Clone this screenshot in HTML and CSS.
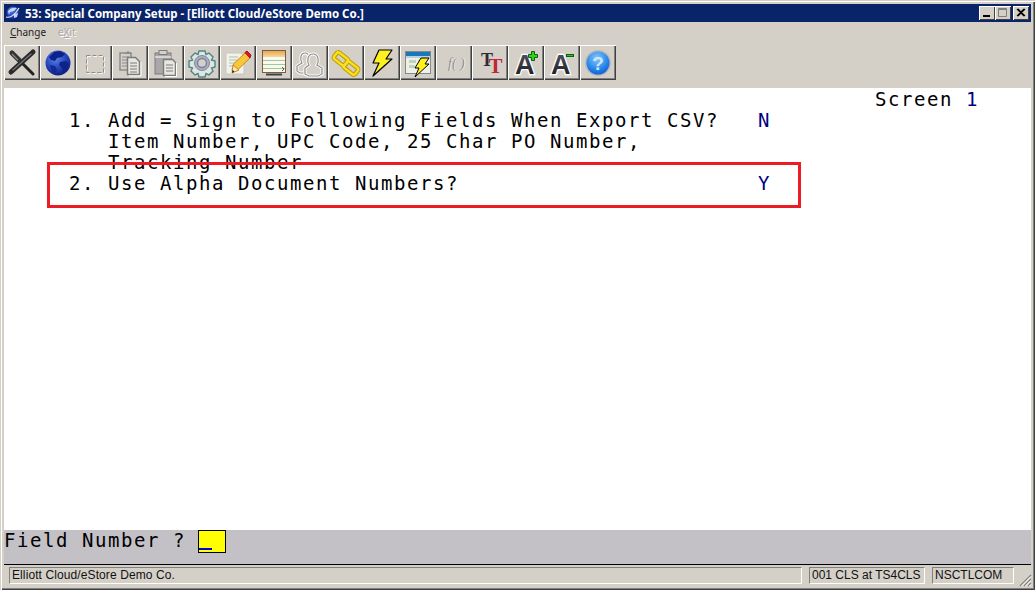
FILE: index.html
```html
<!DOCTYPE html>
<html lang="en">
<head>
  <meta charset="UTF-8" />
  <title>53: Special Company Setup</title>
  <link rel="stylesheet" href="styles.css">
</head>
<body>

<svg class="defs" width="0" height="0">
  <defs>
    <radialGradient id="globe" cx="40%" cy="30%" r="75%">
      <stop offset="0" stop-color="#5a86e8"/>
      <stop offset="0.6" stop-color="#2140b8"/>
      <stop offset="1" stop-color="#0c1a78"/>
    </radialGradient>
    <radialGradient id="help" cx="45%" cy="30%" r="75%">
      <stop offset="0" stop-color="#8cc8fa"/>
      <stop offset="0.6" stop-color="#2a8aec"/>
      <stop offset="1" stop-color="#0c5ad0"/>
    </radialGradient>
    <linearGradient id="letter" x1="0" y1="0" x2="0" y2="1">
      <stop offset="0" stop-color="#5a5a68"/>
      <stop offset="1" stop-color="#14141c"/>
    </linearGradient>
    <linearGradient id="sheet" x1="0" y1="0" x2="0" y2="1">
      <stop offset="0" stop-color="#e8a850"/>
      <stop offset="1" stop-color="#f4d89c"/>
    </linearGradient>
  </defs>
</svg>

<div class="window">

  <div class="titlebar">
    <svg class="app-icon" width="16" height="16" viewBox="0 0 16 16">
      <circle cx="8" cy="8" r="6.5" fill="url(#globe)"/>
      <path d="M3 6c2-3 6-4 9-3l-3 3-4 1-1 3zM9 9l4-1-1 4-3 1z" fill="#c8d4f4"/>
      <path d="M1 12c4 1 9-2 13-9" fill="none" stroke="#e8e8f4" stroke-width="1.2"/>
    </svg>
    <span class="title-text">53: Special Company Setup - [Elliott Cloud/eStore Demo Co.]</span>
    <div class="win-buttons">
      <div class="win-btn"><svg width="16" height="14"><rect x="4" y="9" width="7" height="2" fill="#000"/></svg></div>
      <div class="win-btn"><svg width="16" height="14"><path d="M3.5 2.5h8v8h-8z M3.5 3.5h8" fill="none" stroke="#808080"/></svg></div>
      <div class="win-btn close"><svg width="16" height="14"><path d="M4 3l7 7M5 3l7 7M11 3l-7 7M12 3l-7 7" stroke="#000" fill="none" stroke-width="1.1"/></svg></div>
    </div>
  </div>

  <div class="menubar">
    <span class="menu-item"><u>C</u>hange</span>
    <span class="menu-item disabled">e<u>X</u>it</span>
  </div>

  <div class="toolbar">
    <div class="tool">
      <svg width="30" height="30" viewBox="0 0 30 30">
        <path d="M5 5l21 21" stroke="#222" stroke-width="3" stroke-linecap="round"/>
        <path d="M26 4L4 24" stroke="#2a2a2a" stroke-width="5" stroke-linecap="round"/>
        <path d="M24 6L6 22" stroke="#777" stroke-width="1.2" stroke-linecap="round"/>
        <path d="M5 5l7 7" stroke="#333" stroke-width="5" stroke-linecap="round"/>
        <path d="M5 6l6 6" stroke="#888" stroke-width="1.2"/>
      </svg>
    </div>
    <div class="tool">
      <svg width="30" height="30" viewBox="0 0 30 30">
        <circle cx="15" cy="15" r="12.5" fill="url(#globe)"/>
        <path d="M11 4l6-1 5 3-3 3-5 1-2 3-4-1-2-3zM17 14l6-1 3 3-2 6-4 3-1-5-3-3z" fill="#0f2288"/>
        <path d="M7 17l5 1 2 4-2 4-3-3z" fill="#14288e"/>
      </svg>
    </div>
    <div class="tool">
      <svg width="30" height="30" viewBox="0 0 30 30">
        <rect x="7.5" y="7.5" width="17" height="17" fill="none" stroke="#fff" stroke-width="1" stroke-dasharray="4 2" transform="translate(0.8 0.8)"/>
        <rect x="7.5" y="7.5" width="17" height="17" fill="none" stroke="#8c8c8c" stroke-width="1" stroke-dasharray="4 2"/>
      </svg>
    </div>
    <div class="tool">
      <svg width="30" height="30" viewBox="0 0 30 30">
        <path d="M5 5h11v17H5z" fill="#d4d0c8" stroke="#8c8c8c" stroke-width="1.5"/>
        <path d="M7 9h7M7 12h7M7 15h7M7 18h7" stroke="#8c8c8c"/>
        <path d="M13 3l4 3h-8z" fill="#8c8c8c"/>
        <path d="M12.5 9.5h8l4 4v13h-12z" fill="#e8e6e0" stroke="#7c7c7c" stroke-width="1.5"/>
        <path d="M15 15h7M15 18h7M15 21h7M15 24h7" stroke="#7c7c7c"/>
        <path d="M26 14v14H14" fill="none" stroke="#fff"/>
      </svg>
    </div>
    <div class="tool">
      <svg width="30" height="30" viewBox="0 0 30 30">
        <rect x="4" y="5" width="16" height="21" fill="#a8a8a8" stroke="#7c7c7c"/>
        <rect x="8" y="2.5" width="8" height="4" fill="#d4d0c8" stroke="#7c7c7c"/>
        <path d="M4 9h16" stroke="#fff"/>
        <path d="M12.5 11.5h9l3 3v13h-12z" fill="#e8e6e0" stroke="#7c7c7c" stroke-width="1.4"/>
        <path d="M15 17h7M15 20h7M15 23h7" stroke="#7c7c7c"/>
        <path d="M25.5 15v13.5H14" fill="none" stroke="#fff"/>
      </svg>
    </div>
    <div class="tool">
      <svg width="30" height="30" viewBox="0 0 30 30">
        <path d="M12 3h6l1 3.5 3-1.500 4 4-1.500 3 3.500 1v6l-3.500 1 1.500 3-4 4-3-1.500-1 3.500h-6l-1-3.500-3 1.500-4-4 1.500-3-3.500-1v-6l3.500-1-1.500-3 4-4 3 1.500z" fill="#dfe6e0" stroke="#4f8684" stroke-width="1.4"/>
        <circle cx="15" cy="15" r="7.5" fill="#aab0c0" stroke="#8088a0"/>
        <circle cx="15" cy="15" r="4.5" fill="#d4d0c8" stroke="#7c80a0" stroke-width="1.4"/>
      </svg>
    </div>
    <div class="tool">
      <svg width="30" height="30" viewBox="0 0 30 30">
        <path d="M3 5h15l3 3v18H3z" fill="#f4f2ec" stroke="#c8c8bc"/>
        <path d="M6 9h9M6 12h10M6 15h7M6 18h5" stroke="#a8c0a0"/>
        <path d="M9 22l1.500-6L22 5l5 5-11.500 11z" fill="#f8c838" stroke="#c88820"/>
        <path d="M22 4.500l2-1.500 4 4-1 3z" fill="#d81830" stroke="#b01020"/>
        <path d="M9 25l1-8 6 5z" fill="#f8e8c0" stroke="#c88820"/>
        <path d="M9 25l.5-3 2 1.500z" fill="#222"/>
      </svg>
    </div>
    <div class="tool">
      <svg width="30" height="30" viewBox="0 0 30 30">
        <rect x="3.5" y="2.5" width="23" height="22" fill="#f8f8ec" stroke="#7c5c3c"/>
        <rect x="4" y="3" width="22" height="6" fill="url(#sheet)"/>
        <path d="M4 12.500h22M4 16.500h22M4 20.500h22" stroke="#a0c8a0"/>
        <path d="M7 25.500h16v2H7z" fill="#404040"/>
        <path d="M23 19l2 2-2 2" fill="none" stroke="#555"/>
      </svg>
    </div>
    <div class="tool">
      <svg width="30" height="30" viewBox="0 0 30 30">
        <path d="M2 23v-5l5-3c-2-3-2-10 3-10 3 0 4 2 4 5v15H5z" fill="#d4d0c8" stroke="#fff" stroke-width="3"/>
        <path d="M2 23v-5l5-3c-2-3-2-10 3-10 3 0 4 2 4 5v15H5z" fill="none" stroke="#8c8c8c" stroke-width="1.2"/>
        <path d="M10 26v-6l4-3c-2-3-2-11 4-11s6 8 4 11l5 3v6l-4 2h-9z" fill="#d4d0c8" stroke="#fff" stroke-width="3"/>
        <path d="M10 26v-6l4-3c-2-3-2-11 4-11s6 8 4 11l5 3v6l-4 2h-9z" fill="none" stroke="#8c8c8c" stroke-width="1.2"/>
      </svg>
    </div>
    <div class="tool">
      <svg width="30" height="30" viewBox="0 0 30 30">
        <g fill="none">
          <rect x="3" y="7" width="14" height="8" rx="2" transform="rotate(38 10 11)" stroke="#c09c00" stroke-width="4.5"/>
          <rect x="13" y="16" width="14" height="8" rx="2" transform="rotate(38 20 20)" stroke="#c09c00" stroke-width="4.5"/>
          <rect x="3" y="7" width="14" height="8" rx="2" transform="rotate(38 10 11)" stroke="#f8e020" stroke-width="2.4"/>
          <rect x="13" y="16" width="14" height="8" rx="2" transform="rotate(38 20 20)" stroke="#f8e020" stroke-width="2.4"/>
        </g>
      </svg>
    </div>
    <div class="tool">
      <svg width="30" height="30" viewBox="0 0 30 30">
        <path d="M12 2h13l-6 9h6L6 28l6-13H6z" fill="#fff020" stroke="#000" stroke-width="1.2" stroke-linejoin="round"/>
      </svg>
    </div>
    <div class="tool">
      <svg width="30" height="30" viewBox="0 0 30 30">
        <rect x="2.5" y="3.5" width="25" height="22" fill="#eef0ea" stroke="#888"/>
        <rect x="3" y="4" width="24" height="4" fill="#1878b8"/>
        <rect x="3" y="8" width="24" height="2" fill="#b8d0e0"/>
        <path d="M6 12h7v3H6zM6 17h6v3H6zM15 12h3v3h-3z" fill="#c0d4bc"/>
        <path d="M18 10h8l-4 6h4L12 29l4-9h-4z" fill="#fff020" stroke="#000" stroke-width="1" stroke-linejoin="round"/>
      </svg>
    </div>
    <div class="tool">
      <svg width="36" height="35" viewBox="-3 -2.5 36 35">
        <text class="fx fx-shadow" x="9.7" y="20.7">f( )</text>
        <text class="fx" x="9" y="20">f( )</text>
      </svg>
    </div>
    <div class="tool">
      <svg width="36" height="35" viewBox="-3 -2.5 36 35">
        <text class="tt tt-big" x="6" y="18.5">T</text>
        <text class="tt tt-small" x="13.5" y="25.5">T</text>
      </svg>
    </div>
    <div class="tool">
      <svg width="36" height="35" viewBox="-3 -2.5 36 35">
        <text class="big-a" x="4" y="26">A</text>
        <path d="M20.5 4h3v3h3v3h-3v3h-3v-3h-3v-3h3z" fill="#30d020" stroke="#106010" stroke-width="1"/>
      </svg>
    </div>
    <div class="tool">
      <svg width="36" height="35" viewBox="-3 -2.5 36 35">
        <text class="big-a" x="4" y="26">A</text>
        <rect x="19.5" y="7" width="7" height="2" fill="#30c020" stroke="#106010"/>
      </svg>
    </div>
    <div class="tool">
      <svg width="30" height="30" viewBox="0 0 30 30">
        <circle cx="15" cy="15" r="13" fill="#b8b8bc"/>
        <circle cx="15" cy="15" r="11.5" fill="url(#help)"/>
        <text class="help-mark" x="15" y="22">?</text>
      </svg>
    </div>
  </div>

  <div class="screen-wrap">
    <pre class="screen">                                                                   Screen <span class="val">1</span>
     1. Add = Sign to Following Fields When Export CSV?   <span class="val">N</span>
        Item Number, UPC Code, 25 Char PO Number,
        Tracking Number
     2. Use Alpha Document Numbers?                       <span class="val">Y</span></pre>
    <div class="highlight"></div>
  </div>

  <div class="prompt">
    <span class="prompt-text">Field Number ? </span><span class="prompt-input"></span>
  </div>

  <div class="statusbar">
    <div class="panel panel-main">Elliott Cloud/eStore Demo Co.</div>
    <div class="panel panel-user">001 CLS at TS4CLS</div>
    <div class="panel panel-prog">NSCTLCOM</div>
    <svg class="grip" width="13" height="13" viewBox="0 0 13 13">
      <path d="M12 1L1 12M12 5l-7 7M12 9l-3 3" stroke="#808080" stroke-width="1.2"/>
      <path d="M12 2.500L2.500 12M12 6.500L6.500 12M12 10.500L10.500 12" stroke="#fff" stroke-width="1"/>
    </svg>
  </div>

</div>

</body>
</html>
```

FILE: styles.css
```css
html, body {
  margin: 0;
  padding: 0;
  background: #d4d0c8;
}

.defs {
  position: absolute;
}

.window {
  box-sizing: border-box;
  width: 1035px;
  height: 590px;
  padding: 4px 4px 3px 4px;
  display: flex;
  flex-direction: column;
  background: #d4d0c8;
  box-shadow: inset 1px 1px 0 #d4d0c8, inset 2px 2px 0 #fff, inset -1px -1px 0 #404040, inset -2px -2px 0 #808080;
  overflow: hidden;
}

.titlebar {
  height: 18px;
  flex: none;
  display: flex;
  align-items: center;
  background: #0a246a;
  color: #fff;
  font: bold 11.5px "Noto Sans", sans-serif;
}

.app-icon {
  margin: 0 4px 0 1px;
}

.win-buttons {
  margin-left: auto;
  display: flex;
  padding-right: 2px;
}

.win-btn {
  width: 16px;
  height: 14px;
  background: #d4d0c8;
  box-shadow: inset 1px 1px 0 #fff, inset -1px -1px 0 #404040;
}

.win-btn.close {
  margin-left: 2px;
}

.win-btn svg {
  display: block;
}

.menubar {
  height: 20px;
  flex: none;
  display: flex;
  align-items: center;
  gap: 12px;
  padding-left: 6px;
  font: 10px "Noto Sans", sans-serif;
  color: #222;
}

.menu-item.disabled {
  color: #a8a8a8;
  text-shadow: 1px 1px 0 #fff;
}

.toolbar {
  height: 35px;
  flex: none;
  margin-top: 3px;
  display: flex;
}

.tool {
  box-sizing: border-box;
  width: 36px;
  height: 35px;
  display: flex;
  align-items: center;
  justify-content: center;
  box-shadow: inset 1px 1px 0 #fff, inset -1px -1px 0 #404040, inset -2px -2px 0 #808080;
}

.fx {
  font: italic 14px "Liberation Serif", serif;
  fill: #8c8c8c;
}

.fx-shadow {
  fill: #fff;
}

.tt {
  font-family: "Liberation Serif", serif;
  font-weight: bold;
}

.tt-big {
  font-size: 18px;
  fill: #2c2c3c;
}

.tt-small {
  font-size: 21px;
  fill: #c02838;
}

.big-a {
  font: bold 27px "Liberation Sans", sans-serif;
  fill: url(#letter);
  stroke: #fff;
  stroke-width: 2.5px;
  paint-order: stroke;
}

.help-mark {
  font: bold 19px "Liberation Sans", sans-serif;
  fill: #cfe6fb;
  text-anchor: middle;
}

.screen-wrap {
  position: relative;
  flex: 1;
  margin-top: 8px;
  background: #fff;
}

.screen {
  margin: 0;
  padding-top: 1px;
  font: 19px/21px "DejaVu Sans Mono", monospace;
  letter-spacing: 1.56px;
  color: #000;
}

.val {
  color: #000080;
}

.highlight {
  position: absolute;
  left: 43px;
  top: 74px;
  width: 748px;
  height: 40px;
  border: 3px solid #ed1c24;
}

.prompt {
  height: 34px;
  flex: none;
  display: flex;
  align-items: flex-start;
  background: #c3c1c6;
  font: 19px/21px "DejaVu Sans Mono", monospace;
  letter-spacing: 1.56px;
  white-space: pre;
  color: #000;
}

.prompt-input {
  box-sizing: border-box;
  width: 28px;
  height: 23px;
  margin-left: -1px;
  background: #ff0;
  border: 1px solid #000;
  position: relative;
}

.prompt-input::after {
  content: "";
  position: absolute;
  left: 0;
  bottom: 2px;
  width: 13px;
  height: 2px;
  background: #0000e0;
}

.statusbar {
  box-sizing: border-box;
  height: 23px;
  flex: none;
  display: flex;
  align-items: flex-start;
  border-top: 1px solid #000;
  padding: 2px 0 0 5px;
  position: relative;
  font: 12px "Liberation Sans", Arial, sans-serif;
  color: #111;
}

.panel {
  box-sizing: border-box;
  height: 17px;
  line-height: 15px;
  padding-left: 2px;
  border: 1px solid;
  border-color: #808080 #fff #fff #808080;
  white-space: nowrap;
  overflow: hidden;
}

.panel-main {
  width: 793px;
  letter-spacing: 0.1px;
}

.panel-user {
  width: 116px;
  margin-left: 7px;
}

.panel-prog {
  width: 82px;
  margin-left: 7px;
}

.grip {
  position: absolute;
  right: -1px;
  bottom: 0;
}
```
